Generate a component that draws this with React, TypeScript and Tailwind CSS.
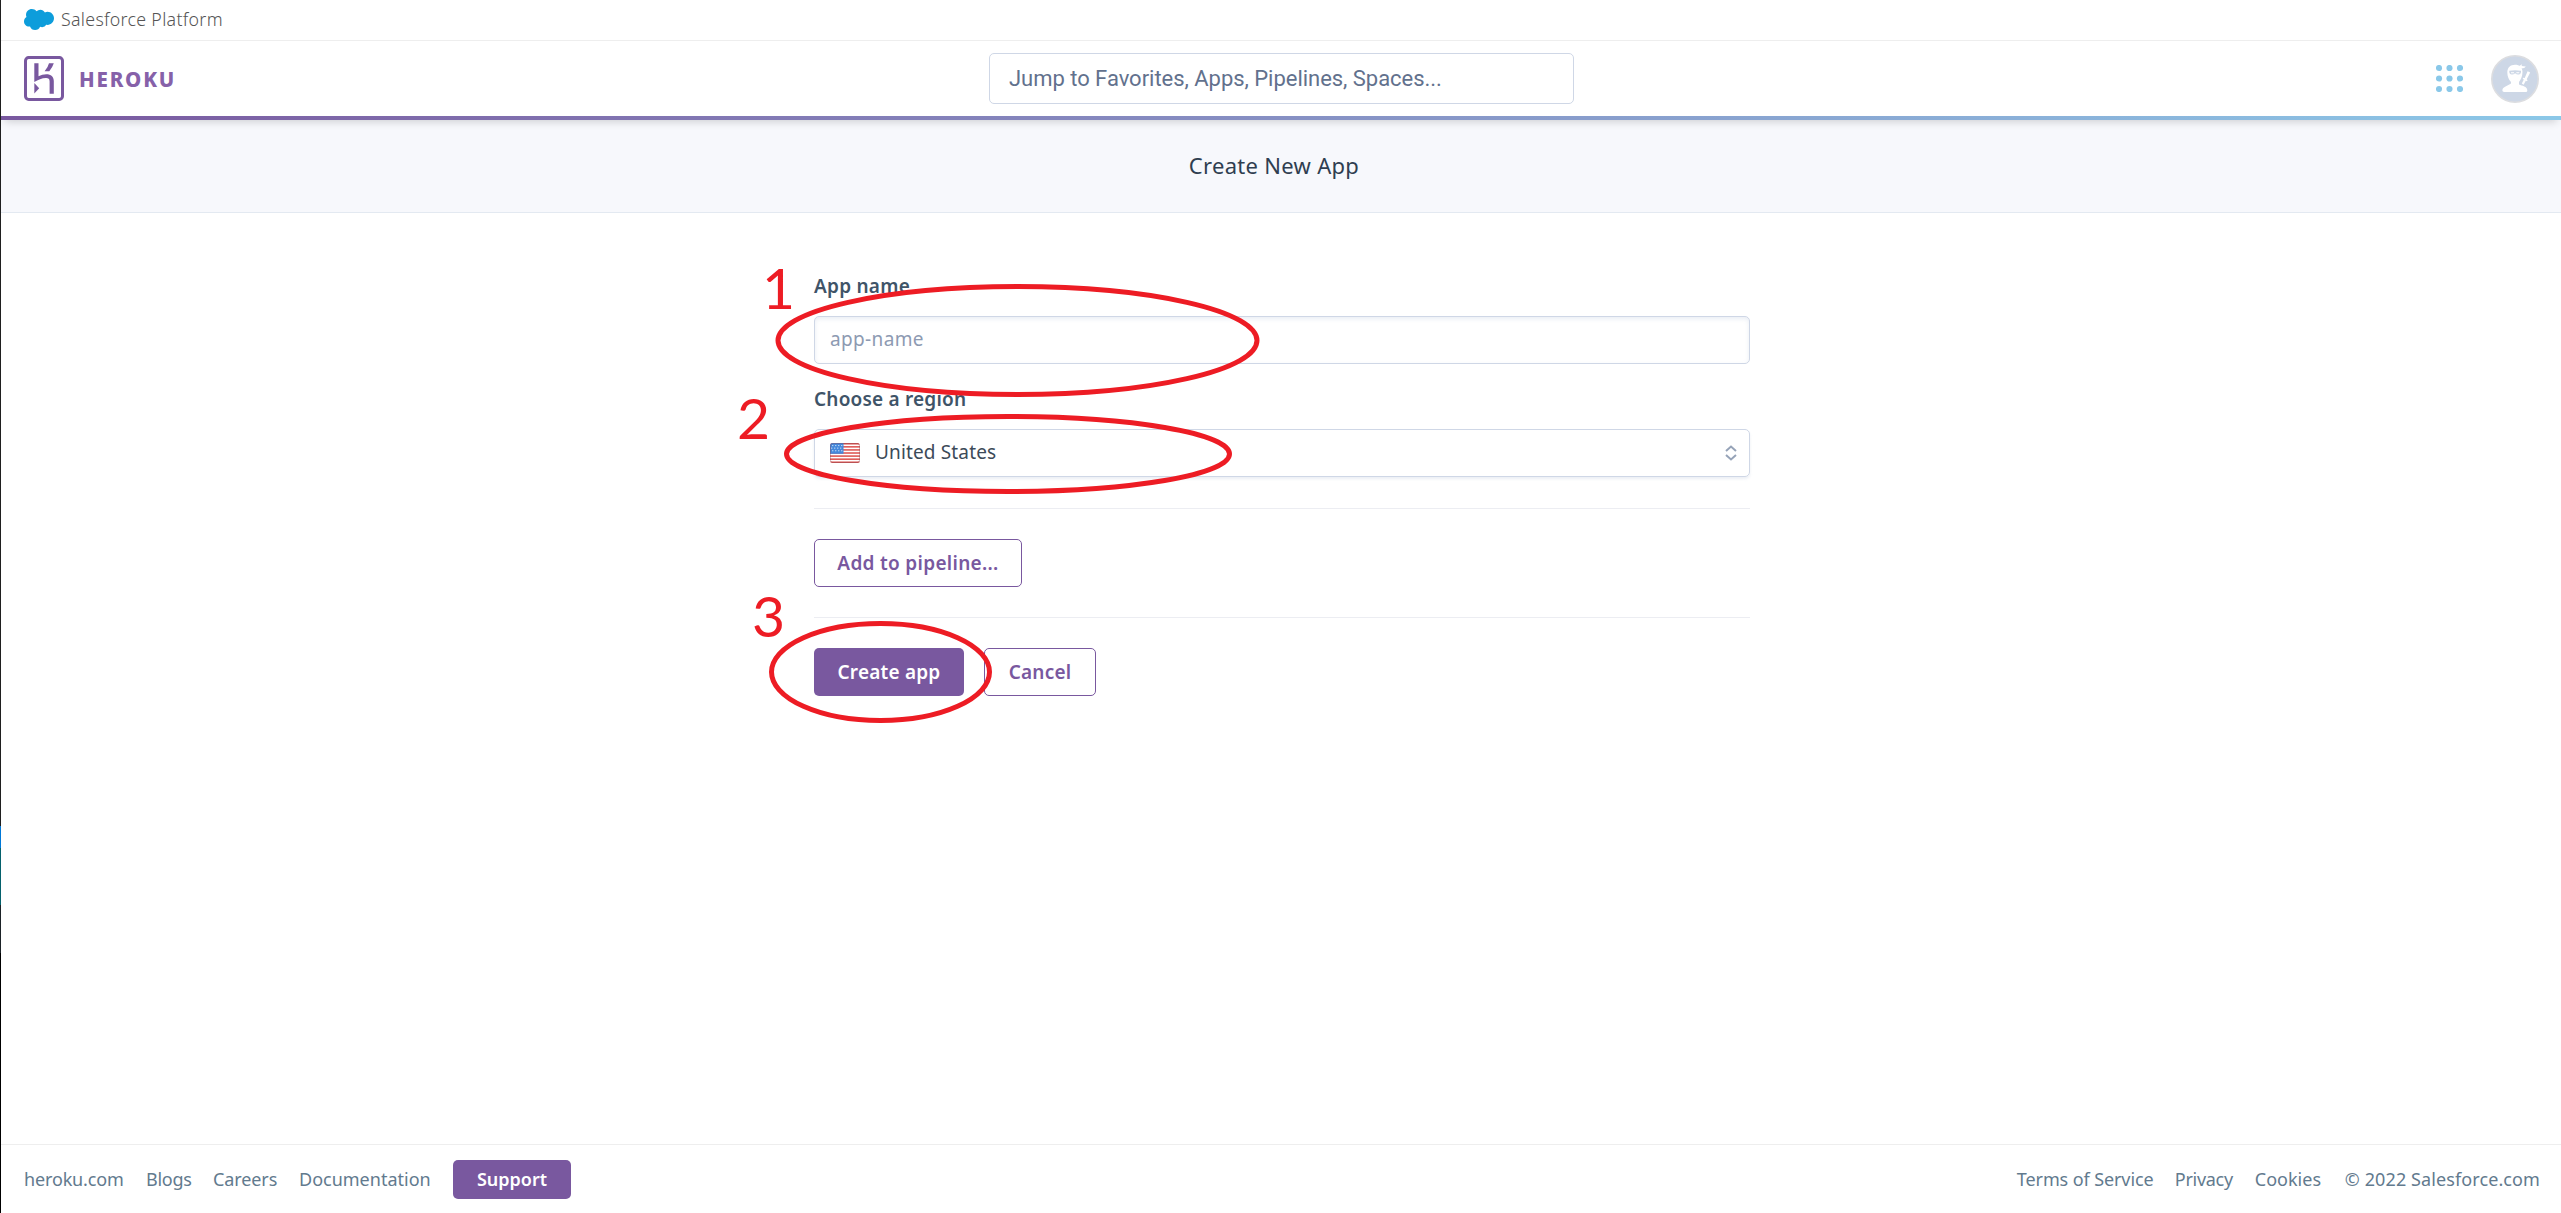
import React from "react";

const noto = "font-['Noto_Sans',sans-serif]";
const roboto = "font-['Roboto',sans-serif]";

function Cloud() {
  return (
    <svg width="30" height="21" viewBox="0 3.6 24 16.8" fill="#0d9ddb" className="shrink-0">
      <path d="M10.006 5.415a4.195 4.195 0 013.045-1.306c1.56 0 2.954.9 3.69 2.205.63-.3 1.35-.45 2.1-.45 2.85 0 5.159 2.34 5.159 5.22s-2.31 5.22-5.176 5.22c-.345 0-.69-.044-1.02-.104a3.75 3.75 0 01-3.3 1.95c-.6 0-1.155-.15-1.65-.375A4.314 4.314 0 018.88 20.4a4.302 4.302 0 01-4.05-2.82c-.27.062-.54.076-.825.076-2.204 0-4.005-1.8-4.005-4.05 0-1.5.811-2.805 2.01-3.51-.255-.57-.39-1.2-.39-1.846 0-2.58 2.1-4.65 4.65-4.65 1.53 0 2.85.705 3.72 1.8z" />
    </svg>
  );
}

function HerokuMark() {
  return (
    <svg width="40" height="45" viewBox="0 0 40 45" fill="#79589f" className="shrink-0">
      <rect x="1.5" y="1.5" width="37" height="42" rx="3.2" fill="none" stroke="#79589f" strokeWidth="3" />
      <path d="M10.3 7.3h4.2V20.2C17 19.2 19.5 18.3 22.3 18.3C27 18.3 29.8 21 29.8 25V37.7H25.6V25.4C25.6 23 24.5 22 22 22C18 22 14 24 10.3 26Z" />
      <path d="M25 7.3H29.8Q28.5 11.5 25.3 15.2H20.6Q24 11.5 25 7.3Z" />
      <path d="M10.3 27L15.2 32.2L10.3 37.4Z" />
    </svg>
  );
}

function AppGrid() {
  const steps = [3, 13.5, 24];
  return (
    <svg width="27" height="27" viewBox="0 0 27 27" fill="#8ac8e9">
      {steps.map((y) => steps.map((x) => <circle key={`${x}-${y}`} cx={x} cy={y} r="3.1" />))}
    </svg>
  );
}

function NinjaAvatar() {
  return (
    <svg width="48" height="48" viewBox="0 0 48 48">
      <circle cx="24" cy="24" r="23.2" fill="#cdd7e6" stroke="#dcdde0" strokeWidth="1.6" />
      <g fill="#fff">
        <path d="M24 9.800C28.500 9.800 31.500 12.500 31.500 17C31.500 21.500 29.500 25 28 27V29.500C31 31 36.300 31 36.300 35.500C36.300 36.600 35.500 37 34.500 37H13.200C12 37 11.400 36.500 11.400 35.300C11.400 31.500 17 31 20 28.500V27C18 25 16.300 21.500 16.300 17.500C16.300 12.500 19.500 9.800 24 9.800Z" />
        <path d="M27.500 11.500L31 9.300L30.600 11L34.800 11.400Q33.800 13.300 30.500 13.600Z" />
        <path d="M36.600 16.300L39.200 17.600L35.700 24.200L36.600 25.200L35.900 26.200L34.800 25.700L32.600 29.800L30.800 28.400L32.800 24.400L31.700 23.700L32.300 22.700L33.700 23Z" />
      </g>
      <path d="M18.300 15.800Q24 14.700 30 15.800Q30.300 19.400 27.500 19.600Q25.500 19.700 24.100 18.300Q22.700 19.700 20.800 19.600Q18 19.400 18.300 15.800Z" fill="#cdd7e6" />
      <path d="M20 17.200h3v1h-3zM25.300 17.200h3v1h-3z" fill="#fff" />
    </svg>
  );
}

function UsFlag() {
  return (
    <svg width="30" height="20" viewBox="0 0 30 20" className="shrink-0">
      <defs>
        <clipPath id="flag-shape">
          <rect width="30" height="20" rx="2.500" />
        </clipPath>
      </defs>
      <g clipPath="url(#flag-shape)">
        <rect width="30" height="20" fill="#ffffff" />
        {[0, 1, 2, 3, 4, 5, 6].map((i) => (
          <rect key={i} y={i * 3.08} width="30" height="1.54" fill="#dd5450" />
        ))}
        <rect width="13.500" height="10.800" fill="#4588db" />
        {[2, 4.6, 7.2].map((y, r) =>
          [2.2, 5.2, 8.2, 11.2].map((x) => (
            <rect key={`${x}-${y}`} x={x - (r % 2)} y={y} width="1.100" height="1.100" fill="#d4e4f8" />
          )),
        )}
      </g>
      <rect x="0.500" y="0.500" width="29" height="19" rx="2.200" fill="none" stroke="#8a4a55" strokeOpacity="0.4" />
    </svg>
  );
}

function SelectArrows() {
  return (
    <svg width="12" height="16" viewBox="0 0 12 16" fill="none" stroke="#96a3b8" strokeWidth="2">
      <path d="M1 6L6 1.500L11 6M1 10L6 14.500L11 10" />
    </svg>
  );
}

/* Hand-drawn style numbered callouts that lie over the form. */
function Annotations() {
  return (
    <div className="pointer-events-none absolute inset-0 font-['Lato',sans-serif] text-[57px] leading-[56px] text-[#ed1c24]">
      <svg className="absolute inset-0" width="2561" height="1213" fill="none" stroke="#ed1c24" strokeWidth="5">
        <ellipse cx="1017.500" cy="340.500" rx="239.500" ry="54" />
        <ellipse cx="1008" cy="454" rx="221.500" ry="37.500" />
        <ellipse cx="880.500" cy="672" rx="109" ry="48.500" />
      </svg>
      <span className="absolute left-[762px] top-[259px]">1</span>
      <span className="absolute left-[737px] top-[389px]">2</span>
      <span className="absolute left-[752px] top-[587px]">3</span>
    </div>
  );
}

export default function App() {
  return (
    <div className={`relative flex h-[1213px] w-[2561px] overflow-hidden bg-white ${noto}`}>
      <div className="flex w-px shrink-0 flex-col bg-black">
        <div className="h-[826px] bg-[#1f1f1f]" />
        <div className="h-[22px] bg-[#0078d7]" />
        <div className="h-[57px] bg-[#04616c]" />
        <div className="h-[48px] bg-[#1b2227]" />
      </div>

      <div className="flex flex-1 flex-col">
        <div className="flex h-[41px] items-center border-b border-[#eeeeee] pl-[23px] pb-[1px]">
          <Cloud />
          <span className="ml-[7px] text-[17.8px] font-light leading-none tracking-[0.3px] text-[#555555]">
            Salesforce Platform
          </span>
        </div>

        <header className="relative z-10 shadow-[0_6px_8px_-4px_rgba(0,0,0,0.16)]">
          <div className="grid h-[75px] grid-cols-[988px_585px_1fr] items-center bg-white">
            <div className="flex items-center pl-[23px]">
              <HerokuMark />
              <span className="ml-[15px] mt-[2px] text-[20.5px] font-extrabold leading-none tracking-[1.8px] text-[#8661a9]">
                HEROKU
              </span>
            </div>
            <div
              className={`flex h-[51px] items-center rounded-[5px] border border-[#cfd7e6] px-[19px] text-[22px] text-[#62718d] ${roboto}`}
            >
              <span className="tracking-[-0.03px]">Jump to Favorites, Apps, Pipelines, Spaces...</span>
            </div>
            <div className="flex items-center justify-end gap-[28px] pr-[22px]">
              <AppGrid />
              <NinjaAvatar />
            </div>
          </div>
          <div className="h-1 bg-linear-to-r from-[#79589f] to-[#8bc8e8]" />
        </header>

        <div className="flex h-[93px] items-center justify-center border-b border-[#e3e9f1] bg-[#f7f8fc] pr-[14px] pb-px text-[22px] tracking-[0.3px] text-[#2f3e50]">
          <span>Create New App</span>
        </div>

        <main className="ml-[813px] flex w-[936px] flex-1 flex-col pt-[60px] text-[19px] leading-[26px]">
          <label className="font-semibold tracking-[0.25px] text-[#3f5468]">App name</label>
          <div className="mt-[17px] flex h-12 items-center rounded-[5px] border border-[#cfd7e6] px-[15px] text-[#8d9ab2] shadow-[inset_0_2px_4px_rgba(207,215,230,0.45)]">
            <span className="pb-[2px] tracking-[0.35px]">app-name</span>
          </div>
          <label className="mt-[22px] font-semibold tracking-[0.2px] text-[#3f5468]">Choose a region</label>
          <div className="mt-[17px] flex h-12 items-center rounded-[5px] border border-[#cfd7e6] pl-[15px] pr-[12px] text-[#3c4a58] shadow-[0_2px_3px_rgba(207,215,230,0.4)]">
            <UsFlag />
            <span className="ml-[15px] flex-1 pb-[2px] tracking-[0.15px]">United States</span>
            <SelectArrows />
          </div>

          <div className="mt-[31px] h-px bg-[#ecedf2]" />
          <button className="mt-[30px] flex h-12 w-[208px] items-center justify-center rounded-[5px] border border-[#79589f] font-semibold text-[#79589f]">
            <span className="pb-px tracking-[0.3px]">Add to pipeline...</span>
          </button>
          <div className="mt-[30px] h-px bg-[#ecedf2]" />
          <div className="mt-[30px] flex gap-5 font-semibold">
            <button className="h-12 w-[150px] rounded-[5px] bg-[#79589f] tracking-[0.2px] text-white">Create app</button>
            <button className="h-12 w-[112px] rounded-[5px] border border-[#79589f] tracking-[0.2px] text-[#79589f]">
              Cancel
            </button>
          </div>
        </main>

        <footer className="flex h-[69px] items-center justify-between border-t border-[#eeeeee] pl-[23px] pr-[21px] text-[18px] leading-none text-[#627a8e]">
          <nav className="flex items-center whitespace-nowrap">
            <a className="w-[122px] tracking-[-0.15px]">heroku.com</a>
            <a className="w-[67px] tracking-[-0.25px]">Blogs</a>
            <a className="w-[86px] tracking-[-0.1px]">Careers</a>
            <a className="w-[154px]">Documentation</a>
            <button className="h-[39px] w-[118px] rounded-[5px] bg-[#79589f] font-semibold text-white">Support</button>
          </nav>
          <div className="flex items-center whitespace-nowrap">
            <a className="w-[158px] tracking-[-0.1px]">Terms of Service</a>
            <a className="w-[80px] tracking-[-0.3px]">Privacy</a>
            <a className="w-[90px]">Cookies</a>
            <span className="tracking-[0.1px]">© 2022 Salesforce.com</span>
          </div>
        </footer>
      </div>

      <Annotations />
    </div>
  );
}
